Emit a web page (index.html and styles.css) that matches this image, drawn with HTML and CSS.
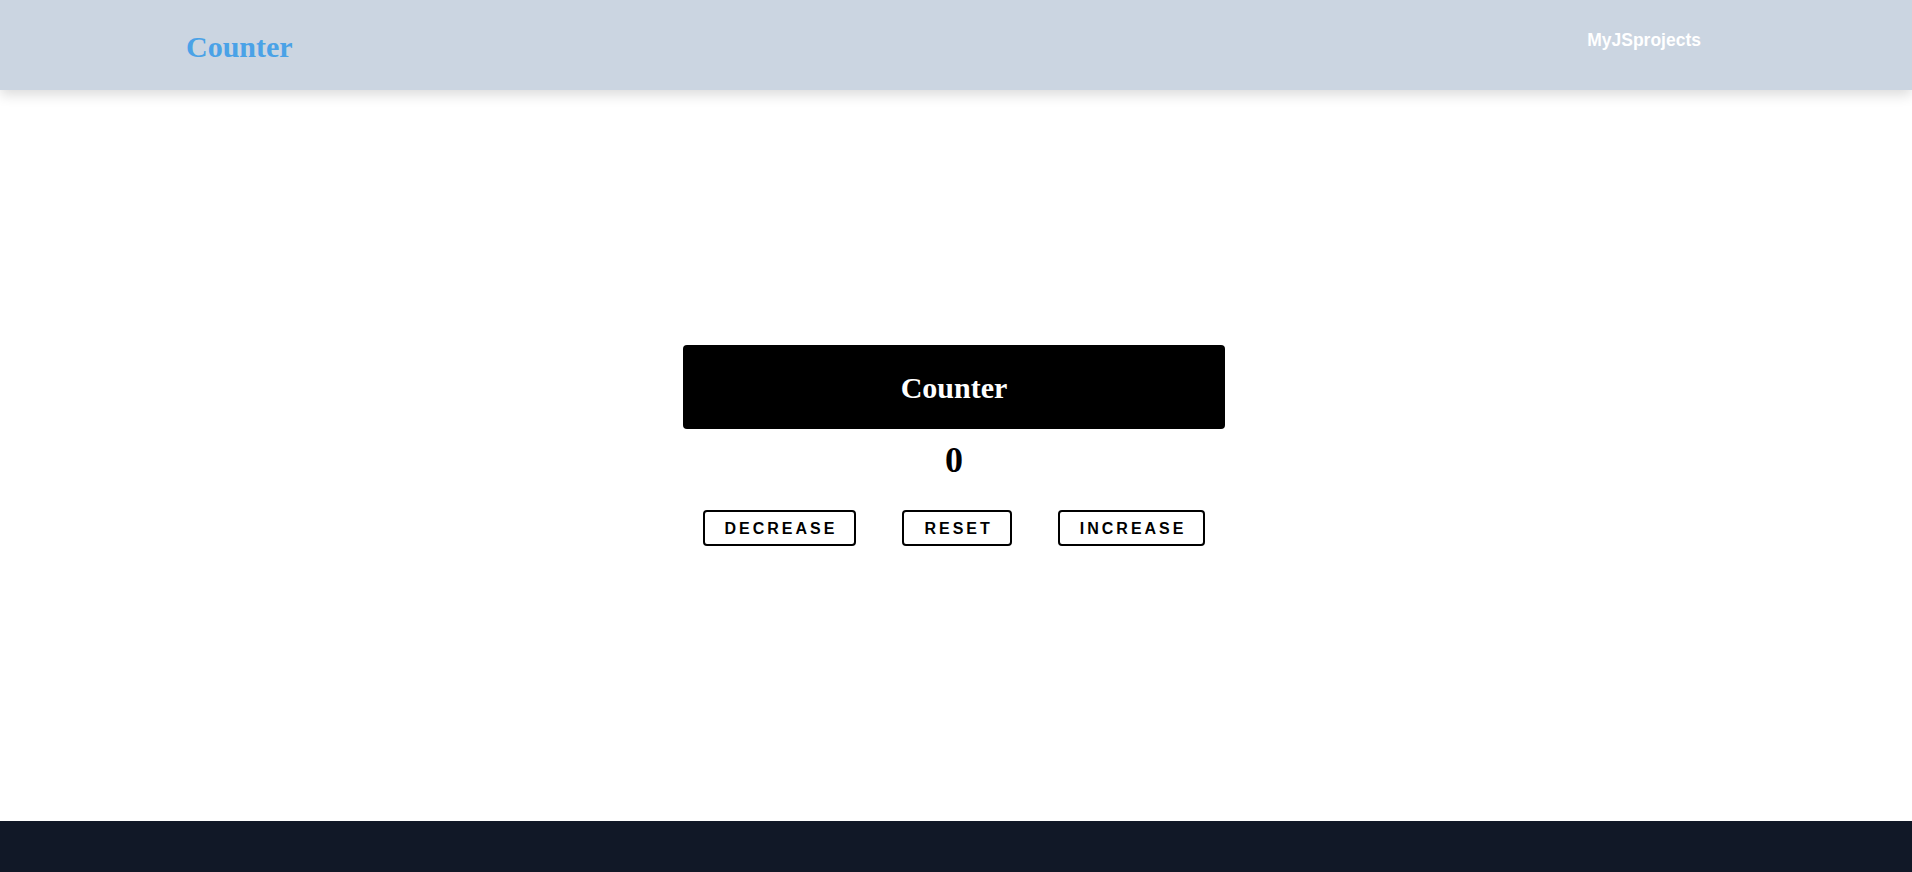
FILE: index.html
```html
<!DOCTYPE html>
<html lang="en">
<head>
<meta charset="utf-8">
<title>Counter</title>
<link rel="stylesheet" href="styles.css">
</head>
<body>
<header class="topbar">
  <h1 class="brand">Counter</h1>
  <a class="nav-link" href="#">MyJSprojects</a>
</header>
<main class="main">
  <section class="counter">
    <div class="counter-head">Counter</div>
    <div class="counter-value">0</div>
    <div class="counter-actions">
      <button class="btn">DECREASE</button>
      <button class="btn">RESET</button>
      <button class="btn">INCREASE</button>
    </div>
  </section>
</main>
<footer class="footer"></footer>
</body>
</html>
```

FILE: styles.css
```css
* { box-sizing: border-box; }
html, body { margin: 0; padding: 0; }
body {
  background: #ffffff;
  font-family: "Liberation Serif", "Times New Roman", serif;
  height: 872px;
  overflow: hidden;
  display: flex;
  flex-direction: column;
}
.topbar {
  height: 90px;
  flex: none;
  background: #cbd5e1;
  display: flex;
  justify-content: space-between;
  align-items: flex-start;
  padding: 30px 211px 0 186px;
  box-shadow: 0 5px 12px rgba(0, 0, 0, 0.14);
  position: relative;
  z-index: 1;
}
.brand {
  margin: 0;
  font-family: "Liberation Serif", "Times New Roman", serif;
  font-size: 30px;
  line-height: 34px;
  font-weight: 700;
  color: #4aa2e7;
}
.nav-link {
  font-family: "Liberation Sans", Arial, sans-serif;
  font-size: 17.5px;
  line-height: 20px;
  font-weight: 700;
  color: #ffffff;
  text-decoration: none;
}
.main {
  flex: 1;
  display: flex;
  justify-content: center;
  padding-top: 255px;
  margin-right: 4px;
}
.counter {
  width: 542px;
  display: flex;
  flex-direction: column;
  align-items: center;
}
.counter-head {
  width: 100%;
  height: 84px;
  background: #000000;
  border-radius: 4px;
  color: #ffffff;
  font-size: 30px;
  font-weight: 700;
  display: flex;
  align-items: center;
  justify-content: center;
  padding-top: 1px;
}
.counter-value {
  margin-top: 11px;
  font-size: 36px;
  line-height: 40px;
  font-weight: 700;
  color: #000000;
}
.counter-actions {
  margin-top: 30px;
  display: flex;
  gap: 46px;
}
.btn {
  font-family: "Liberation Sans", Arial, sans-serif;
  font-size: 16px;
  line-height: 19px;
  font-weight: 700;
  letter-spacing: 3px;
  color: #000000;
  background: #ffffff;
  border: 2px solid #000000;
  border-radius: 4px;
  height: 36px;
  padding: 0 17px 0 20px;
  cursor: pointer;
}
.footer {
  height: 51px;
  flex: none;
  background: #111827;
}
```
